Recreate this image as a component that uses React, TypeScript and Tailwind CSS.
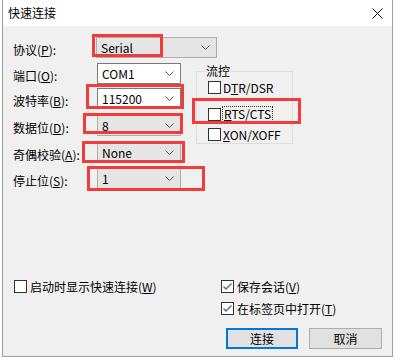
import React from 'react';

const font = { fontFamily: '"Noto Sans CJK SC", "Microsoft YaHei", sans-serif' };

const Chevron: React.FC = () => (
  <svg width="9" height="5" viewBox="0 0 9 5" className="shrink-0">
    <path d="M0.5 0.5 L4.5 4.5 L8.5 0.5" fill="none" stroke="#555" strokeWidth="1" />
  </svg>
);

const Combo: React.FC<{ value: string; width: string; white?: boolean }> = ({ value, width, white }) => (
  <div
    className={`${width} h-[21px] flex items-center justify-between pl-[4px] pr-[6px] border ${
      white ? 'bg-white border-[#7a7a7a]' : 'bg-[#e5e5e5] border-[#adadad]'
    }`}
  >
    <span className="text-[12px] leading-none text-black">{value}</span>
    <Chevron />
  </div>
);

const Box: React.FC<{ checked?: boolean }> = ({ checked }) => (
  <span className="w-[13px] h-[13px] shrink-0 bg-white border border-[#333] flex items-center justify-center">
    {checked && (
      <svg width="11" height="11" viewBox="0 0 11 11">
        <path d="M1.5 5.5 L4 8 L9.5 2.5" fill="none" stroke="#666" strokeWidth="1.4" />
      </svg>
    )}
  </span>
);

const Label: React.FC<{ text: string; k: string }> = ({ text, k }) => (
  <span className="text-[12px] leading-none text-black whitespace-nowrap">
    {text}(<u>{k}</u>):
  </span>
);

const rows = [
  { text: '端口', k: 'O', value: 'COM1', white: true, mt: '' },
  { text: '波特率', k: 'B', value: '115200', white: true, mt: 'mt-[4px]' },
  { text: '数据位', k: 'D', value: '8', white: false, mt: 'mt-[6px]' },
  { text: '奇偶校验', k: 'A', value: 'None', white: false, mt: 'mt-[6px]' },
  { text: '停止位', k: 'S', value: '1', white: false, mt: 'mt-[5px]' },
];

const redBoxes = [
  'left-[92px] top-[34px] w-[71px] h-[23px]',
  'left-[86px] top-[84px] w-[98px] h-[25px]',
  'left-[83px] top-[113px] w-[100px] h-[21px]',
  'left-[82px] top-[141px] w-[103px] h-[22px]',
  'left-[87px] top-[166px] w-[118px] h-[25px]',
  'left-[192px] top-[98px] w-[109px] h-[26px]',
];

export default function App() {
  return (
    <div className="relative w-[396px] h-[364px] bg-white overflow-hidden" style={font}>
      <div className="ml-[2px] w-[391px] h-[357px] border-x border-b border-[#a0a0a0] flex flex-col">
        {/* title bar */}
        <div className="h-[26px] bg-white flex items-center justify-between pl-[5px] pr-[9px] shrink-0">
          <span className="text-[12px] text-black leading-none">快速连接</span>
          <svg width="11" height="11" viewBox="0 0 11 11">
            <path d="M0.5 0.5 L10.5 10.5 M10.5 0.5 L0.5 10.5" stroke="#111" strokeWidth="1" />
          </svg>
        </div>

        {/* body */}
        <div className="flex-1 bg-[#f0f0f0] flex flex-col pt-[11px]">
          <div className="flex items-center h-[21px] pl-[10px]">
            <div className="w-[83px]">
              <Label text="协议" k="P" />
            </div>
            <Combo value="Serial" width="w-[121px]" />
          </div>

          <div className="flex mt-[5px] pl-[10px]">
            <div className="flex flex-col">
              {rows.map((r) => (
                <div key={r.k} className={`flex items-center h-[21px] ${r.mt}`}>
                  <div className="w-[84px]">
                    <Label text={r.text} k={r.k} />
                  </div>
                  <Combo value={r.value} width="w-[84px]" white={r.white} />
                </div>
              ))}
            </div>

            <fieldset className="ml-[15px] w-[97px] h-[80px] mt-[1px] border border-[#dcdcdc] px-[11px]">
              <legend className="ml-[-3px] px-[1px] text-[12px] leading-[14px] text-black">流控</legend>
              <div className="flex items-center gap-[2px] mt-[3px]">
                <Box />
                <span className="text-[12px] leading-none">D<u>T</u>R/DSR</span>
              </div>
              <div className="flex items-center gap-[1px] mt-[12px]">
                <Box />
                <span className="text-[12px] leading-none border border-dotted border-[#333] px-[1px] py-[1px]">
                  <u>R</u>TS/CTS
                </span>
              </div>
              <div className="flex items-center gap-[2px] mt-[6px]">
                <Box />
                <span className="text-[12px] leading-none">
                  <u>X</u>ON/XOFF
                </span>
              </div>
            </fieldset>
          </div>

          {/* bottom options */}
          <div className="flex mt-[91px] pl-[11px]">
            <div className="w-[207px] flex items-center gap-[3px] h-[13px]">
              <Box />
              <span className="text-[12px] leading-none whitespace-nowrap">
                启动时显示快速连接(<u>W</u>)
              </span>
            </div>
            <div className="flex flex-col gap-[9px]">
              <div className="flex items-center gap-[3px] h-[13px]">
                <Box checked />
                <span className="text-[12px] leading-none whitespace-nowrap">
                  保存会话(<u>V</u>)
                </span>
              </div>
              <div className="flex items-center gap-[3px] h-[13px]">
                <Box checked />
                <span className="text-[12px] leading-none whitespace-nowrap">
                  在标签页中打开(<u>T</u>)
                </span>
              </div>
            </div>
          </div>

          <div className="flex justify-end gap-[11px] pr-[10px] mt-[13px]">
            <button className="w-[72px] h-[21px] bg-[#e1e1e1] border-2 border-[#0078d7] text-[12px] leading-none text-black">
              连接
            </button>
            <button className="w-[73px] h-[21px] bg-[#e1e1e1] border border-[#adadad] text-[12px] leading-none text-black">
              取消
            </button>
          </div>
        </div>
      </div>

      {redBoxes.map((c) => (
        <div key={c} className={`absolute ${c} border-[3px] border-[#f23c3c] pointer-events-none`} />
      ))}
    </div>
  );
}
